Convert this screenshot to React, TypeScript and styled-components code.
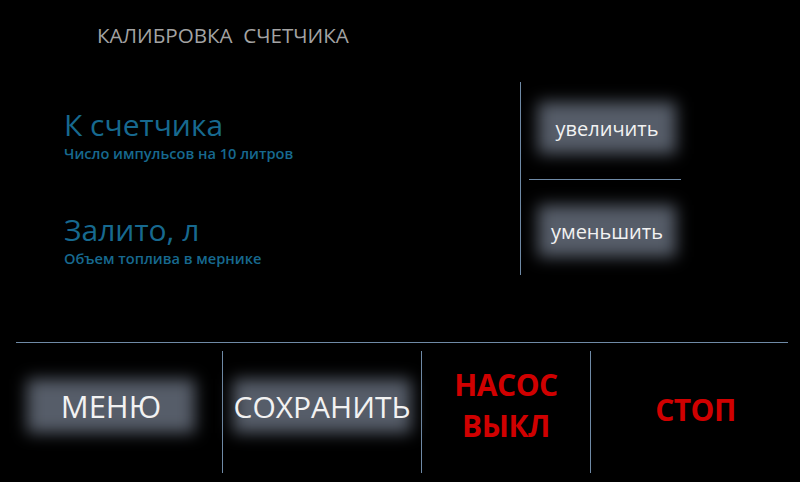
import React from "react";
import styled, { createGlobalStyle } from "styled-components";

const Global = createGlobalStyle`
  html, body { margin: 0; padding: 0; background: #000; }
  body { width: 800px; height: 482px; overflow: hidden; font-family: "Open Sans", "Noto Sans", sans-serif; }
`;

const Screen = styled.div`
  width: 800px;
  height: 482px;
  background: #000;
  display: flex;
  flex-direction: column;
`;

const Header = styled.div`
  height: 82px;
  padding-left: 97px;
  padding-top: 21px;
  box-sizing: border-box;
  color: #a3a3a3;
  font-size: 20.6px;
  white-space: pre;
`;

const Main = styled.div`
  display: flex;
  height: 261px;
  border-bottom: 1px solid #6f8aa6;
  margin: 0 12px 0 16px;
  box-sizing: border-box;
`;

const Labels = styled.div`
  width: 504px;
  padding-left: 48px;
  padding-top: 23px;
  box-sizing: border-box;
  display: flex;
  flex-direction: column;
  gap: 48px;
`;

const Field = styled.div`
  display: flex;
  flex-direction: column;
  color: #17698f;
`;

const FieldTitle = styled.div`
  font-size: 30px;
  line-height: 40px;
`;

const FieldHint = styled.div`
  font-size: 14.6px;
  font-weight: 600;
  line-height: 18px;
  margin-top: -1px;
`;

const Controls = styled.div`
  height: 193px;
  border-left: 1px solid #6f8aa6;
  width: 170px;
  display: flex;
  flex-direction: column;
  padding-left: 8px;
`;

const ControlCell = styled.div<{ $h?: number; $top?: number; $bottom?: number }>`
  ${(p) => (p.$h ? `height: ${p.$h}px;` : "flex: 1;")}
  box-sizing: border-box;
  display: flex;
  align-items: center;
  padding-left: 9px;
  padding-top: ${(p) => p.$top ?? 0}px;
  padding-bottom: ${(p) => p.$bottom ?? 0}px;
`;

const Divider = styled.div`
  height: 1px;
  width: 152px;
  background: #6f8aa6;
`;

const GlowButton = styled.div<{ $w: number; $h: number; $size: number }>`
  position: relative;
  width: ${(p) => p.$w}px;
  height: ${(p) => p.$h}px;
  display: flex;
  align-items: center;
  justify-content: center;
  color: #f2f2f2;
  font-size: ${(p) => p.$size}px;
  white-space: nowrap;
  &::before {
    content: "";
    position: absolute;
    inset: 0;
    background: #565d69;
    filter: blur(8px);
    z-index: 0;
  }
  span { position: relative; z-index: 1; }
`;

const Footer = styled.div`
  flex: 1;
  display: flex;
  padding: 8px 0 9px 0;
`;

const FootCell = styled.div<{ $w: number; $line?: boolean; $shift?: number }>`
  width: ${(p) => p.$w}px;
  display: flex;
  align-items: center;
  justify-content: center;
  border-right: ${(p) => (p.$line ? "1px solid #6f8aa6" : "none")};
  box-sizing: border-box;
  padding-bottom: ${(p) => p.$shift ?? 0}px;
`;

const RedLabel = styled.div`
  color: #d00000;
  font-weight: 700;
  font-size: 30px;
  line-height: 41px;
  text-align: center;
  letter-spacing: -0.5px;
`;

export default function App() {
  return (
    <Screen>
      <Global />
      <Header>КАЛИБРОВКА  СЧЕТЧИКА</Header>
      <Main>
        <Labels>
          <Field>
            <FieldTitle>К счетчика</FieldTitle>
            <FieldHint>Число импульсов на 10 литров</FieldHint>
          </Field>
          <Field>
            <FieldTitle>Залито, л</FieldTitle>
            <FieldHint>Объем топлива в мернике</FieldHint>
          </Field>
        </Labels>
        <Controls>
          <ControlCell $h={97} $bottom={5}>
            <GlowButton $w={138} $h={52} $size={20}>
              <span>увеличить</span>
            </GlowButton>
          </ControlCell>
          <Divider />
          <ControlCell $top={7}>
            <GlowButton $w={138} $h={52} $size={20}>
              <span>уменьшить</span>
            </GlowButton>
          </ControlCell>
        </Controls>
      </Main>
      <Footer>
        <FootCell $w={223} $line $shift={12}>
          <GlowButton $w={168} $h={54} $size={31}>
            <span>МЕНЮ</span>
          </GlowButton>
        </FootCell>
        <FootCell $w={199} $line $shift={12}>
          <GlowButton $w={178} $h={54} $size={30}>
            <span>СОХРАНИТЬ</span>
          </GlowButton>
        </FootCell>
        <FootCell $w={169} $line $shift={14}>
          <RedLabel>НАСОС<br />ВЫКЛ</RedLabel>
        </FootCell>
        <FootCell $w={209} $shift={6}>
          <RedLabel>СТОП</RedLabel>
        </FootCell>
      </Footer>
    </Screen>
  );
}
